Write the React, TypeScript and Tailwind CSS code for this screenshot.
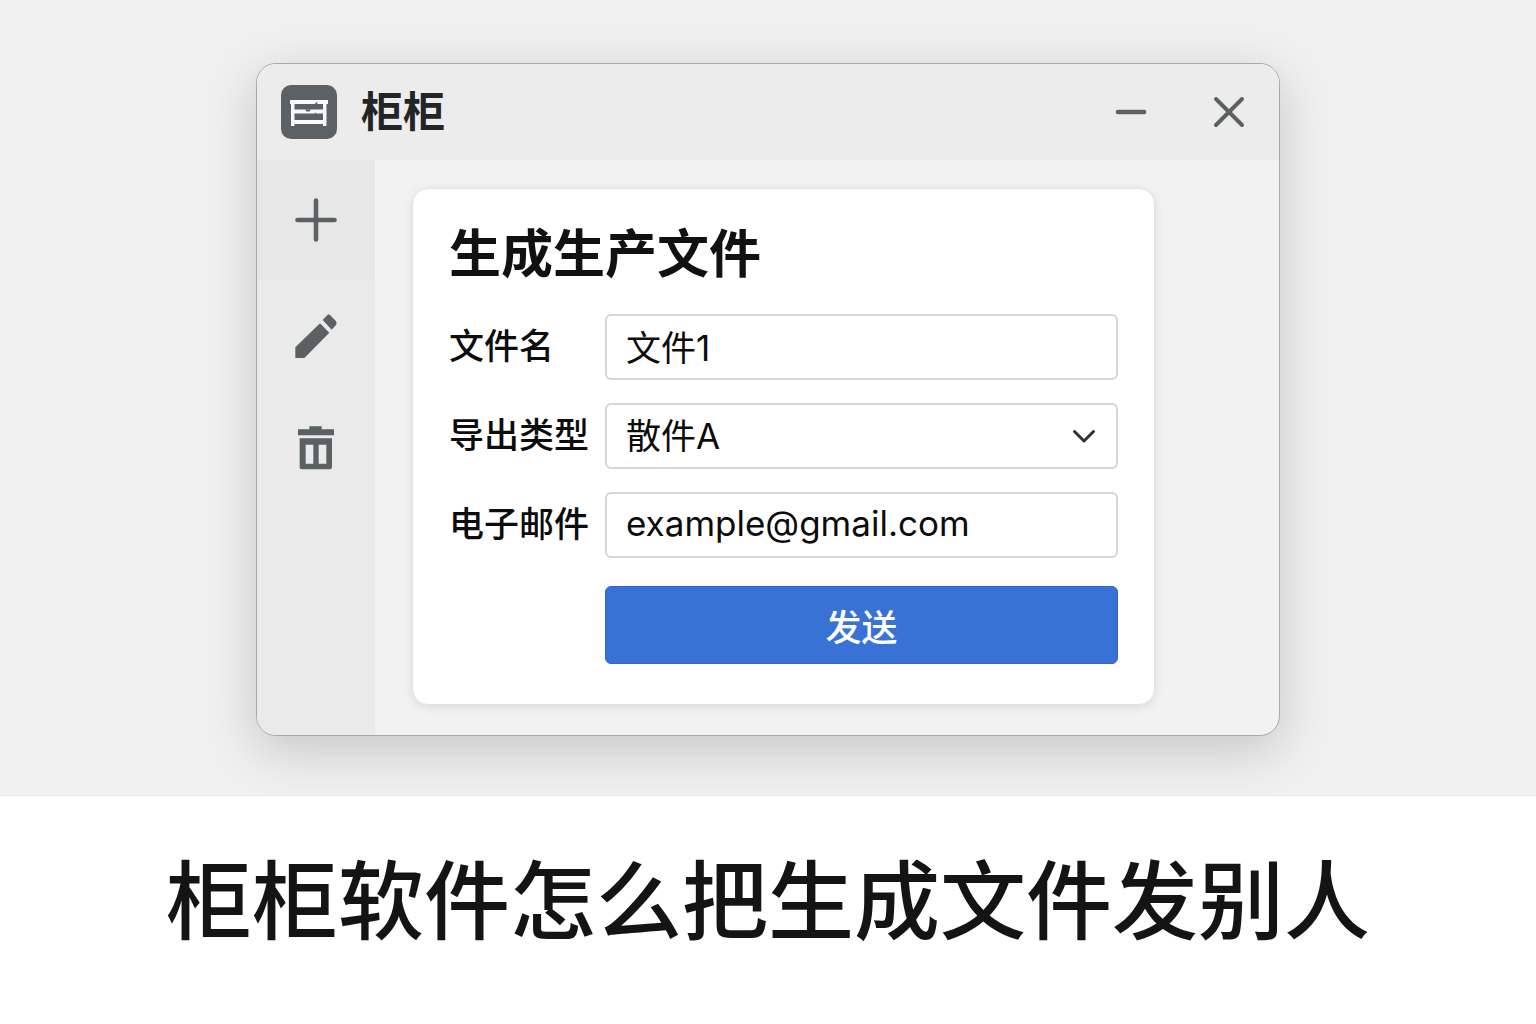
import React, { useState } from 'react';

const fieldClass =
  "h-[66px] w-full rounded-md border-2 border-[#d6d6d6] bg-white px-[19px] font-['Inter','Noto_Sans_CJK_SC',sans-serif] text-[35px] leading-[44px] text-[#0c0c0c] outline-none focus:border-[#3972d5]";

function CabinetLogo() {
  return (
    <svg viewBox="0 0 56 54" className="h-[54px] w-14" aria-hidden="true">
      <rect width="56" height="54" rx="10" fill="#5b6165" />
      <path
        d="M9 15H47V19H45.500V41H42V39H13.500V41H10V19H9ZM13.500 19V24.500H42V19ZM13.500 28.500V35H42V28.500Z"
        fill="#f8f9fb"
        fillRule="evenodd"
      />
      <path d="M24 24.400H30L28.500 26.500H25.500ZM33 28.600L34.500 27.400L36 28.600ZM33.500 19L36.500 16.500L36 19Z" fill="#5b6165" />
    </svg>
  );
}

function PlusIcon() {
  return (
    <svg viewBox="0 0 44 46" className="h-[46px] w-11" fill="none" stroke="#5b6063" strokeWidth="4.6" strokeLinecap="round" aria-hidden="true">
      <path d="M22 3.500V42.500M3.500 23H40.500" />
    </svg>
  );
}

function PencilIcon() {
  return (
    <svg viewBox="0 0 132 138" className="h-[46px] w-11" fill="#5b6063" aria-hidden="true">
      <path d="M4 103L78 31L106 59L31 135H4Z" />
      <path d="M86 21L101 5Q104 2 107 5L125 23Q130 29 126 36L113 50Z" />
    </svg>
  );
}

function TrashIcon() {
  return (
    <svg viewBox="0 0 108 132" className="h-11 w-9" fill="#5b6063" aria-hidden="true">
      <path d="M0 10H34V1H71V10H108V28H0Z" />
      <path d="M5 37H102V123Q102 130 95 130H12Q5 130 5 123ZM23 56V113H46V56ZM62 56V113H85V56Z" fillRule="evenodd" />
    </svg>
  );
}

interface FieldRowProps {
  id: string;
  label: string;
  children: React.ReactNode;
}

function FieldRow({ id, label, children }: FieldRowProps) {
  return (
    <div className="flex items-center">
      <label
        htmlFor={id}
        className="w-[156px] shrink-0 pb-1.5 text-[35px] leading-[44px] font-medium whitespace-nowrap text-[#0c0c0c]"
      >
        {label}
      </label>
      <div className="relative min-w-0 flex-1">{children}</div>
    </div>
  );
}

export default function App() {
  const [fileName, setFileName] = useState('文件1');
  const [exportType, setExportType] = useState('散件A');
  const [email, setEmail] = useState('example@gmail.com');

  return (
    <div className="min-h-screen bg-white font-['Noto_Sans_CJK_SC',sans-serif]">
      {/* Stage with the app window */}
      <main className="overflow-hidden border-b border-[#e8e8e8] bg-[#f0f0f0] pt-[63px] pb-[59px]">
        <div className="mx-auto w-2/3 overflow-hidden rounded-[20px] border border-[#a9a9a9] bg-[#f2f2f2] shadow-[0_14px_50px_rgba(0,0,0,0.18)]">
          <header className="flex h-24 items-center bg-[#ececec] pr-7 pl-6">
            <CabinetLogo />
            <span className="ml-6 pb-1.5 text-[42px] leading-[56px] font-bold text-[#222425]">柜柜</span>
            <div className="ml-auto flex items-center gap-[54px]">
              <button type="button" aria-label="最小化" className="flex size-11 items-center justify-center">
                <svg viewBox="0 0 36 36" className="size-9" stroke="#5b6063" strokeWidth="4.600" strokeLinecap="round" aria-hidden="true">
                  <path d="M5 18H31" />
                </svg>
              </button>
              <button type="button" aria-label="关闭" className="flex size-11 items-center justify-center">
                <svg viewBox="0 0 36 36" className="size-9" stroke="#5b6063" strokeWidth="4" strokeLinecap="round" aria-hidden="true">
                  <path d="M5 5L31 31M31 5L5 31" />
                </svg>
              </button>
            </div>
          </header>

          <div className="flex">
            <nav className="flex w-[118px] shrink-0 flex-col bg-[#eaeaea]">
              <button type="button" aria-label="新建" className="flex h-[120px] items-center justify-center bg-[#e7e7e7]">
                <PlusIcon />
              </button>
              <button type="button" aria-label="编辑" className="flex h-28 items-center justify-center">
                <PencilIcon />
              </button>
              <button type="button" aria-label="删除" className="flex h-28 items-center justify-center">
                <TrashIcon />
              </button>
            </nav>

            <section className="min-w-0 flex-1 pt-7 pr-[124px] pb-[30px] pl-[37px]">
              <form
                className="rounded-2xl border border-[#e4e4e4] bg-white px-9 pt-8 pb-10 shadow-[0_2px_10px_rgba(0,0,0,0.10)]"
                onSubmit={(e) => e.preventDefault()}
              >
                <h2 className="mb-[33px] text-[52px] leading-[60px] font-bold text-[#111]">生成生产文件</h2>
                <div className="flex flex-col gap-[23px]">
                  <FieldRow id="file-name" label="文件名">
                    <input
                      id="file-name"
                      type="text"
                      className={`${fieldClass} pb-1`}
                      value={fileName}
                      onChange={(e) => setFileName(e.target.value)}
                    />
                  </FieldRow>
                  <FieldRow id="export-type" label="导出类型">
                    <select
                      id="export-type"
                      className={`${fieldClass} appearance-none`}
                      value={exportType}
                      onChange={(e) => setExportType(e.target.value)}
                    >
                      <option value="散件A">散件A</option>
                    </select>
                    <svg
                      viewBox="0 0 24 16"
                      className="pointer-events-none absolute top-1/2 right-[22px] h-4 w-6 -translate-y-1/2"
                      fill="none"
                      stroke="#303234"
                      strokeWidth="3"
                      strokeLinecap="round"
                      strokeLinejoin="round"
                      aria-hidden="true"
                    >
                      <path d="M2.500 3.500L12 13L21.500 3.500" />
                    </svg>
                  </FieldRow>
                  <FieldRow id="email" label="电子邮件">
                    <input
                      id="email"
                      type="email"
                      className={`${fieldClass} pb-1`}
                      value={email}
                      onChange={(e) => setEmail(e.target.value)}
                    />
                  </FieldRow>
                </div>
                <div className="mt-7 pl-[156px]">
                  <button
                    type="submit"
                    className="h-[78px] w-full rounded-md border border-[#2f67ce] bg-[#3972d5] text-[36px] leading-[44px] font-medium text-white"
                  >
                    发送
                  </button>
                </div>
              </form>
            </section>
          </div>
        </div>
      </main>

      <h1 className="px-4 pt-11 pb-8 text-center text-[86px] leading-[112px] font-medium text-[#141414]">
        柜柜软件怎么把生成文件发别人
      </h1>
    </div>
  );
}
